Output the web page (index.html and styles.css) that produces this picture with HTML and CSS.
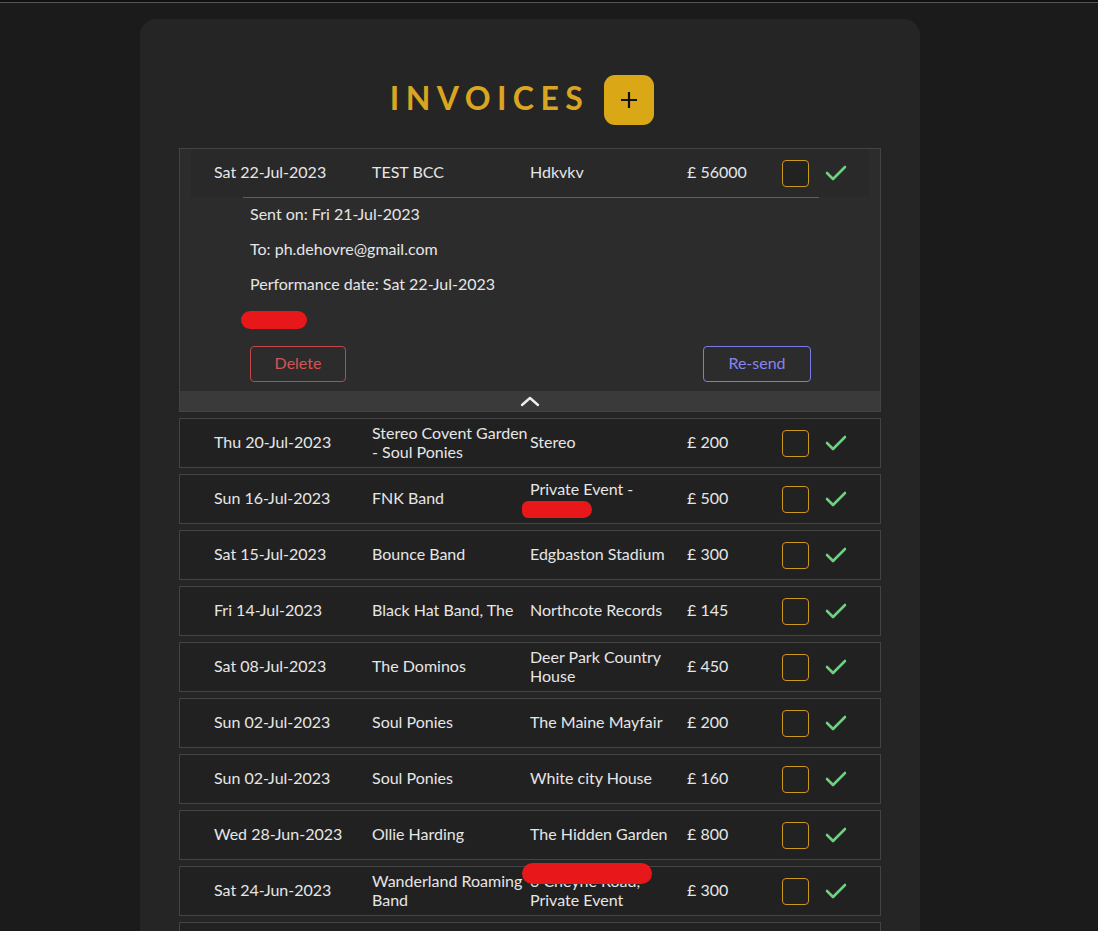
FILE: index.html
```html
<!DOCTYPE html>
<html lang="en">
<head>
<meta charset="utf-8">
<title>Invoices</title>
<link rel="stylesheet" href="styles.css">
</head>
<body>
<div class="topline"></div>
<main class="card">
  <header class="title-bar">
    <h1 class="title">INVOICES</h1>
    <button class="add-btn" aria-label="Add invoice">
      <svg width="20" height="20" viewBox="0 0 20 20"><path d="M10 2v16M2 10h16" stroke="#111" stroke-width="2.2" fill="none"/></svg>
    </button>
  </header>

  <section class="list">
    <div class="expanded">
      <div class="row-head">
        <span>Sat 22-Jul-2023</span>
        <span>TEST BCC</span>
        <span>Hdkvkv</span>
        <span>£ 56000</span>
        <span class="box"></span>
        <svg class="check" width="22" height="16" viewBox="0 0 22 16"><polyline points="2,8 8,14 20,2" fill="none" stroke="#6fd17f" stroke-width="2.6" stroke-linecap="round" stroke-linejoin="round"/></svg>
      </div>
      <div class="details">
        <div class="line">Sent on: Fri 21-Jul-2023</div>
        <div class="line">To: ph.dehovre@gmail.com</div>
        <div class="line">Performance date: Sat 22-Jul-2023</div>
        <div class="line"><span class="redact redact-small"></span></div>
        <div class="actions">
          <button class="btn btn-delete">Delete</button>
          <button class="btn btn-resend">Re-send</button>
        </div>
      </div>
      <div class="collapse-bar">
        <svg width="20" height="12" viewBox="0 0 20 12"><polyline points="2,10 10,3 18,10" fill="none" stroke="#eee" stroke-width="2.4" stroke-linecap="round" stroke-linejoin="round"/></svg>
      </div>
    </div>

    <div class="row">
      <span>Thu 20-Jul-2023</span><span>Stereo Covent Garden - Soul Ponies</span><span>Stereo</span><span>£ 200</span><span class="box"></span>
      <svg class="check" width="22" height="16" viewBox="0 0 22 16"><polyline points="2,8 8,14 20,2" fill="none" stroke="#6fd17f" stroke-width="2.6" stroke-linecap="round" stroke-linejoin="round"/></svg>
    </div>
    <div class="row">
      <span>Sun 16-Jul-2023</span><span>FNK Band</span><span class="venue">Private Event -<br><span class="redact redact-venue1"></span></span><span>£ 500</span><span class="box"></span>
      <svg class="check" width="22" height="16" viewBox="0 0 22 16"><polyline points="2,8 8,14 20,2" fill="none" stroke="#6fd17f" stroke-width="2.6" stroke-linecap="round" stroke-linejoin="round"/></svg>
    </div>
    <div class="row">
      <span>Sat 15-Jul-2023</span><span>Bounce Band</span><span>Edgbaston Stadium</span><span>£ 300</span><span class="box"></span>
      <svg class="check" width="22" height="16" viewBox="0 0 22 16"><polyline points="2,8 8,14 20,2" fill="none" stroke="#6fd17f" stroke-width="2.6" stroke-linecap="round" stroke-linejoin="round"/></svg>
    </div>
    <div class="row">
      <span>Fri 14-Jul-2023</span><span>Black Hat Band, The</span><span>Northcote Records</span><span>£ 145</span><span class="box"></span>
      <svg class="check" width="22" height="16" viewBox="0 0 22 16"><polyline points="2,8 8,14 20,2" fill="none" stroke="#6fd17f" stroke-width="2.6" stroke-linecap="round" stroke-linejoin="round"/></svg>
    </div>
    <div class="row">
      <span>Sat 08-Jul-2023</span><span>The Dominos</span><span>Deer Park Country House</span><span>£ 450</span><span class="box"></span>
      <svg class="check" width="22" height="16" viewBox="0 0 22 16"><polyline points="2,8 8,14 20,2" fill="none" stroke="#6fd17f" stroke-width="2.6" stroke-linecap="round" stroke-linejoin="round"/></svg>
    </div>
    <div class="row">
      <span>Sun 02-Jul-2023</span><span>Soul Ponies</span><span>The Maine Mayfair</span><span>£ 200</span><span class="box"></span>
      <svg class="check" width="22" height="16" viewBox="0 0 22 16"><polyline points="2,8 8,14 20,2" fill="none" stroke="#6fd17f" stroke-width="2.6" stroke-linecap="round" stroke-linejoin="round"/></svg>
    </div>
    <div class="row">
      <span>Sun 02-Jul-2023</span><span>Soul Ponies</span><span>White city House</span><span>£ 160</span><span class="box"></span>
      <svg class="check" width="22" height="16" viewBox="0 0 22 16"><polyline points="2,8 8,14 20,2" fill="none" stroke="#6fd17f" stroke-width="2.6" stroke-linecap="round" stroke-linejoin="round"/></svg>
    </div>
    <div class="row">
      <span>Wed 28-Jun-2023</span><span>Ollie Harding</span><span>The Hidden Garden</span><span>£ 800</span><span class="box"></span>
      <svg class="check" width="22" height="16" viewBox="0 0 22 16"><polyline points="2,8 8,14 20,2" fill="none" stroke="#6fd17f" stroke-width="2.6" stroke-linecap="round" stroke-linejoin="round"/></svg>
    </div>
    <div class="row">
      <span>Sat 24-Jun-2023</span><span class="nowrap">Wanderland Roaming<br>Band</span><span class="venue">6 Cheyne Road,<br>Private Event<span class="redact redact-venue2"></span></span><span>£ 300</span><span class="box"></span>
      <svg class="check" width="22" height="16" viewBox="0 0 22 16"><polyline points="2,8 8,14 20,2" fill="none" stroke="#6fd17f" stroke-width="2.6" stroke-linecap="round" stroke-linejoin="round"/></svg>
    </div>
    <div class="row row-last">
      <span>Fri 23-Jun-2023</span><span>Soul Ponies</span><span>The Ivy</span><span>£ 250</span><span class="box"></span>
      <svg class="check" width="22" height="16" viewBox="0 0 22 16"><polyline points="2,8 8,14 20,2" fill="none" stroke="#6fd17f" stroke-width="2.6" stroke-linecap="round" stroke-linejoin="round"/></svg>
    </div>
  </section>
</main>
</body>
</html>
```

FILE: styles.css
```css
* { box-sizing: border-box; }

html, body {
  margin: 0;
  padding: 0;
  background: #1b1b1b;
  font-family: Lato, "Open Sans", sans-serif;
  color: #e6e6e6;
  font-size: 16px;
}

.topline {
  height: 3px;
  background: #101010;
  border-bottom: 1px solid #565656;
}

.card {
  width: 780px;
  margin: 16px 0 0 140px;
  background: #252525;
  border-radius: 16px;
  padding: 56px 39px 40px;
}

.title-bar {
  display: flex;
  align-items: center;
  justify-content: center;
  padding-right: 16px;
}

.title {
  margin: 0;
  font-size: 32px;
  font-weight: 700;
  letter-spacing: 0.2em;
  color: #daa520;
  line-height: 46px;
  padding-bottom: 4px;
}

.add-btn {
  width: 50px;
  height: 50px;
  margin-left: 15px;
  border: none;
  border-radius: 11px;
  background: #daa817;
  display: flex;
  align-items: center;
  justify-content: center;
  padding: 0;
}

.list {
  margin-top: 23px;
}

.expanded {
  border: 1px solid #444;
  background: #2c2c2c;
  margin-bottom: 6px;
}

.row-head,
.row {
  display: grid;
  grid-template-columns: 158px 158px 157px 95px 27px 44px;
  align-items: center;
  line-height: 19px;
}

.row-head {
  margin: 0 11px;
  height: 48px;
  padding-left: 23px;
  padding-bottom: 3px;
  background: #292929;
}

.row {
  height: 50px;
  padding-left: 34px;
  padding-bottom: 3px;
  border: 1px solid #444;
  background: #212121;
  margin-bottom: 6px;
}

.box {
  width: 27px;
  height: 27px;
  border: 1px solid #c9981c;
  border-radius: 4px;
  background: #222;
  margin-top: 3px;
}

.check {
  margin-left: 16px;
  margin-top: 3px;
}

.nowrap { white-space: nowrap; }

.venue { position: relative; }

.details {
  margin: 0 61px 0 63px;
  border-top: 1px solid #5e5e5e;
  padding: 0 8px 0 7px;
}

.line {
  line-height: 31px;
  height: 35px;
}

.redact {
  display: inline-block;
  background: #e8171a;
  border-radius: 10px;
}

.redact-small {
  width: 66px;
  height: 18px;
  margin-left: -9px;
  vertical-align: middle;
  position: relative;
  top: -1px;
}

.redact-venue1 {
  position: relative;
  vertical-align: top;
  left: -8px;
  top: 3px;
  width: 70px;
  height: 17px;
  border-radius: 9px 12px 12px 9px;
}

.redact-venue2 {
  position: absolute;
  left: -8px;
  top: -8px;
  width: 130px;
  height: 21px;
  border-radius: 11px;
}

.actions {
  display: flex;
  justify-content: space-between;
  margin-top: 8px;
}

.btn {
  height: 36px;
  border-radius: 4px;
  background: transparent;
  font-family: Lato, sans-serif;
  font-size: 16px;
  padding: 0 0 3px;
}

.btn-delete {
  width: 96px;
  border: 1px solid #c54848;
  color: #d55454;
}

.btn-resend {
  width: 108px;
  border: 1px solid #7b7be8;
  color: #8585f2;
}

.collapse-bar {
  margin-top: 9px;
  height: 20px;
  background: #3a3a3a;
  display: flex;
  justify-content: center;
  align-items: center;
}
```
